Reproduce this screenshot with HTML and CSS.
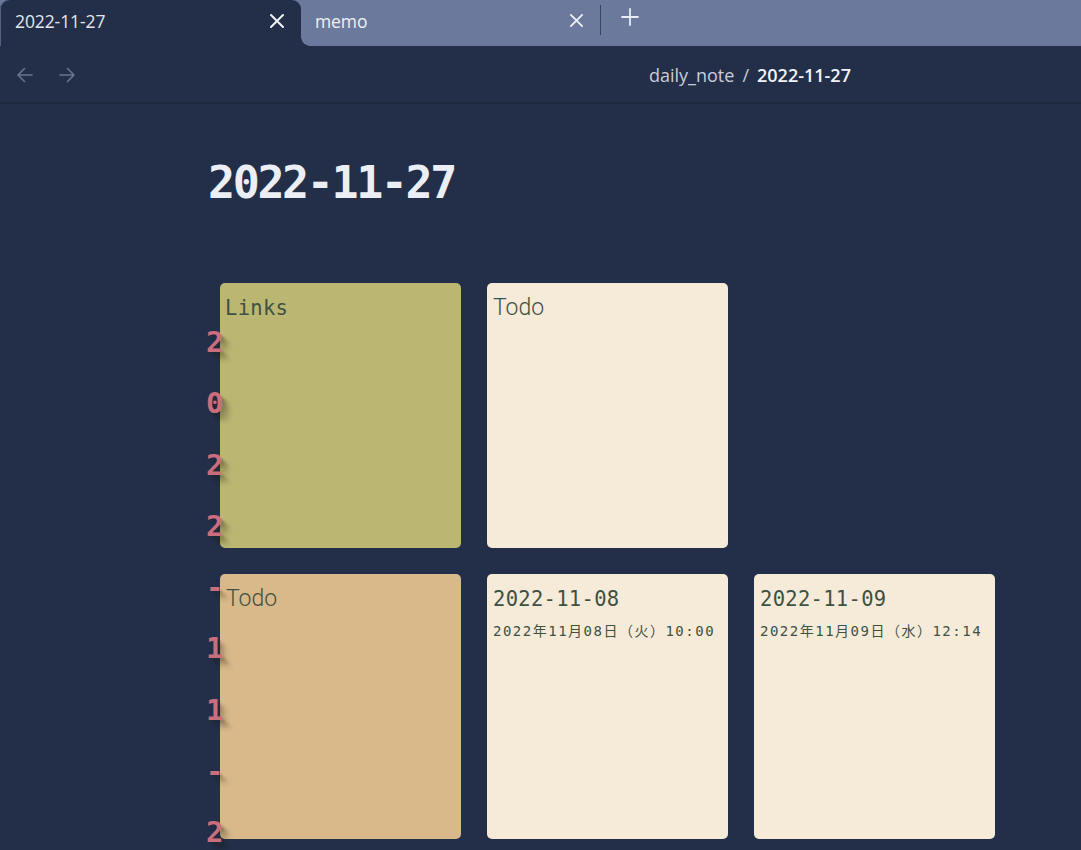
FILE: index.html
```html
<!DOCTYPE html>
<html lang="ja">
<head>
<meta charset="utf-8">
<title>2022-11-27</title>
<link rel="stylesheet" href="styles.css">
</head>
<body>
<header class="tabbar">
  <div class="tab tab-active">
    <span class="tab-title">2022-11-27</span>
    <svg class="tab-close" viewBox="0 0 16 16" width="16" height="16"><path d="M2 2L14 14M14 2L2 14" stroke="currentColor" stroke-width="2" stroke-linecap="round"/></svg>
  </div>
  <div class="tab tab-inactive">
    <span class="tab-title">memo</span>
    <svg class="tab-close" viewBox="0 0 16 16" width="16" height="16"><path d="M2 2L14 14M14 2L2 14" stroke="currentColor" stroke-width="1.8" stroke-linecap="round"/></svg>
  </div>
  <div class="tab-divider"></div>
  <svg class="tab-new" viewBox="0 0 18 18" width="18" height="18"><path d="M9 1V17M1 9H17" stroke="currentColor" stroke-width="1.8" stroke-linecap="round"/></svg>
</header>
<nav class="navbar">
  <div class="nav-arrows">
    <svg viewBox="0 0 18 18" width="18" height="18"><path d="M16 9H2M8.5 2.5L2 9L8.5 15.5" fill="none" stroke="currentColor" stroke-width="1.6" stroke-linecap="round" stroke-linejoin="round"/></svg>
    <svg viewBox="0 0 18 18" width="18" height="18"><path d="M2 9H16M9.5 2.5L16 9L9.5 15.5" fill="none" stroke="currentColor" stroke-width="1.6" stroke-linecap="round" stroke-linejoin="round"/></svg>
  </div>
  <div class="breadcrumb"><span class="crumb-parent">daily_note</span><span class="crumb-sep">/</span><span class="crumb-current">2022-11-27</span></div>
</nav>
<main class="main">
  <h1 class="title">2022-11-27</h1>
  <div class="board">
    <div class="card card-olive"><div class="card-head mono">Links</div></div>
    <div class="card card-cream"><div class="card-head sans">Todo</div></div>
    <div class="card card-empty"></div>
    <div class="card card-tan"><div class="card-head sans">Todo</div></div>
    <div class="card card-cream"><div class="card-head mono">2022-11-08</div><div class="card-sub">2022年11月08日（火）10:00</div></div>
    <div class="card card-cream"><div class="card-head mono">2022-11-09</div><div class="card-sub">2022年11月09日（水）12:14</div></div>
  </div>
  <div class="vertical-date">2022-11-27</div>
</main>
</body>
</html>
```
FILE: styles.css
```css
html, body {
  margin: 0;
  padding: 0;
}
body {
  background: #232f48;
  width: 1081px;
  height: 850px;
  overflow: hidden;
  font-family: "Open Sans", "Noto Sans", sans-serif;
}
.tabbar {
  height: 46px;
  background: #6b7a9c;
  display: flex;
  align-items: flex-start;
}
.tab {
  box-sizing: border-box;
  height: 46px;
  display: flex;
  align-items: flex-start;
  justify-content: space-between;
  padding-top: 9px;
  font-size: 17.5px;
  letter-spacing: -0.1px;
}
.tab-active {
  width: 301px;
  background: #232f48;
  border-radius: 9px 9px 0 0;
  padding-left: 15px;
  padding-right: 16px;
  color: #e3e6ee;
  position: relative;
  box-shadow: inset 1px 0 0 #55627f;
}
.tab-active::after {
  content: "";
  position: absolute;
  right: -9px;
  bottom: 0;
  width: 9px;
  height: 9px;
  background: radial-gradient(circle at 100% 0, transparent 8.5px, #232f48 9px);
}
.tab-inactive {
  width: 299px;
  padding-left: 14px;
  padding-right: 16px;
  color: #eef0f5;
}
.tab-close {
  margin-top: 4px;
  color: #f2f4f8;
}
.tab-inactive .tab-close {
  width: 15px;
  height: 15px;
  margin-top: 4px;
}
.tab-divider {
  width: 1px;
  height: 30px;
  margin-top: 5px;
  background: #384461;
}
.tab-new {
  margin-left: 20px;
  margin-top: 8px;
  color: #e9ecf3;
}
.navbar {
  height: 58px;
  box-sizing: border-box;
  border-bottom: 2px solid #1e283d;
  display: flex;
  align-items: center;
  position: relative;
}
.nav-arrows {
  display: flex;
  gap: 24px;
  padding-left: 16px;
  color: #6a748f;
  padding-top: 1px;
}
.breadcrumb {
  position: absolute;
  left: 649px;
  top: 17px;
  font-size: 18px;
  letter-spacing: 0;
  color: #c9cdd9;
  display: flex;
  gap: 8px;
}
.crumb-current {
  color: #f1f3f8;
  font-weight: 600;
}
.main {
  position: relative;
  padding-left: 208px;
  padding-top: 49px;
}
.title {
  margin: 0;
  font-family: "DejaVu Sans Mono", monospace;
  font-weight: bold;
  font-size: 45px;
  letter-spacing: -2.4px;
  line-height: 60px;
  color: #eceef5;
}
.board {
  margin-top: 70px;
  margin-left: 12px;
  display: grid;
  grid-template-columns: repeat(3, 241px);
  grid-auto-rows: 265px;
  gap: 26px;
}
.card {
  border-radius: 5px;
  padding: 11px 6px;
  box-sizing: border-box;
  color: #3f5142;
}
.card-olive { background: #bbb773; padding-left: 5px; }
.card-cream { background: #f6ebd9; }
.card-tan { background: #d9b98a; }
.card-empty { background: transparent; }
.card-head {
  font-size: 21px;
  line-height: 28px;
}
.mono {
  font-family: "DejaVu Sans Mono", monospace;
  font-size: 20.5px;
  letter-spacing: 0.3px;
}
.sans {
  font-family: "Roboto", sans-serif;
  font-weight: 300;
  font-size: 23px;
}
.card-sub {
  margin-top: 7px;
  font-family: "DejaVu Sans Mono", "Noto Sans CJK JP", monospace;
  font-size: 14px;
  letter-spacing: 1.5px;
  white-space: nowrap;
}
.vertical-date {
  position: absolute;
  left: 206px;
  top: 208px;
  width: 18px;
  word-break: break-all;
  font-family: "DejaVu Sans Mono", monospace;
  font-weight: bold;
  font-size: 29px;
  line-height: 61.3px;
  color: #cb6d7d;
  text-shadow: 3px 3px 2px rgba(30, 30, 20, 0.22), 6px 6px 3px rgba(30, 30, 20, 0.18), 9px 9px 4px rgba(30, 30, 20, 0.12);
}
```
